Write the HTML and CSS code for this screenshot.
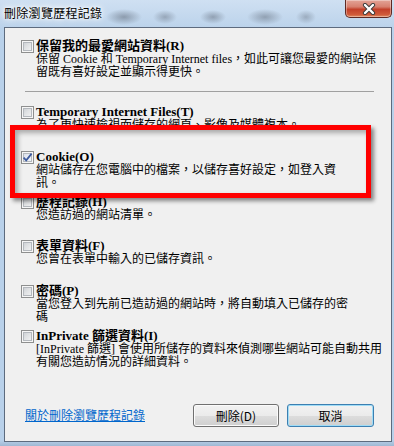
FILE: index.html
```html
<!DOCTYPE html>
<html lang="zh-Hant">
<head>
<meta charset="utf-8">
<title>刪除瀏覽歷程記錄</title>
<link rel="stylesheet" href="styles.css">
</head>
<body>
<div class="window">
  <div class="titlebar">
    <span class="title">刪除瀏覽歷程記錄</span>
    <div class="close">
      <svg width="14" height="12" viewBox="0 0 14 12"><path d="M3 2 L11 10 M11 2 L3 10" stroke="#3a3a3a" stroke-width="4.2" stroke-linecap="round" fill="none"/><path d="M3 2 L11 10 M11 2 L3 10" stroke="#ffffff" stroke-width="2.4" stroke-linecap="round" fill="none"/></svg>
    </div>
  </div>
  <div class="panel">
    <div class="option first">
      <span class="cb"></span>
      <div class="text">
        <div class="label">保留我的最愛網站資料(R)</div>
        <div class="desc">保留 Cookie 和 Temporary Internet files，如此可讓您最愛的網站保<br>留既有喜好設定並顯示得更快。</div>
      </div>
    </div>
    <div class="sep"></div>
    <div class="option">
      <span class="cb"></span>
      <div class="text">
        <div class="label">Temporary Internet Files(T)</div>
        <div class="desc">為了更快速檢視而儲存的網頁、影像及媒體複本。</div>
      </div>
    </div>
    <div class="option">
      <span class="cb checked"><svg width="11" height="11" viewBox="0 0 11 11"><path d="M1.6 5.6 L4.2 8.4 L9.6 1.6" stroke="#3d5a9e" stroke-width="1.7" fill="none"/></svg></span>
      <div class="text">
        <div class="label">Cookie(O)</div>
        <div class="desc">網站儲存在您電腦中的檔案，以儲存喜好設定，如登入資<br>訊。</div>
      </div>
    </div>
    <div class="option">
      <span class="cb"></span>
      <div class="text">
        <div class="label">歷程記錄(H)</div>
        <div class="desc">您造訪過的網站清單。</div>
      </div>
    </div>
    <div class="option">
      <span class="cb"></span>
      <div class="text">
        <div class="label">表單資料(F)</div>
        <div class="desc">您曾在表單中輸入的已儲存資訊。</div>
      </div>
    </div>
    <div class="option">
      <span class="cb"></span>
      <div class="text">
        <div class="label">密碼(P)</div>
        <div class="desc">當您登入到先前已造訪過的網站時，將自動填入已儲存的密<br>碼</div>
      </div>
    </div>
    <div class="option">
      <span class="cb"></span>
      <div class="text">
        <div class="label">InPrivate 篩選資料(I)</div>
        <div class="desc">[InPrivate 篩選] 會使用所儲存的資料來偵測哪些網站可能自動共用<br>有關您造訪情況的詳細資料。</div>
      </div>
    </div>
    <div class="footer">
      <a class="link" href="#">關於刪除瀏覽歷程記錄</a>
      <div class="buttons">
        <button class="btn">刪除(D)</button>
        <button class="btn default">取消</button>
      </div>
    </div>
    <div class="highlight"></div>
  </div>
</div>
</body>
</html>
```
FILE: styles.css
```css
* { box-sizing: border-box; }
html, body { margin: 0; padding: 0; }
body {
  width: 394px;
  height: 446px;
  overflow: hidden;
  background: #b9d1ea;
  font-family: "Liberation Serif", "Noto Sans CJK TC", serif;
  color: #000;
}
.window {
  width: 394px;
  height: 446px;
  display: flex;
  flex-direction: column;
  background: linear-gradient(to bottom, #bcd4ec 0, #b9d1ea 40px, #b9d1ea 440px, #9fb8d3 446px);
}
.titlebar {
  height: 27px;
  flex: none;
  display: flex;
  justify-content: space-between;
  align-items: flex-start;
  padding-left: 4px;
  background:
    radial-gradient(ellipse 18px 8px at 124px 17px, rgba(95,105,120,.55), rgba(95,105,120,0)),
    radial-gradient(ellipse 12px 7px at 165px 17px, rgba(95,105,120,.45), rgba(95,105,120,0)),
    radial-gradient(ellipse 13px 7px at 213px 17px, rgba(95,105,120,.5), rgba(95,105,120,0)),
    radial-gradient(ellipse 18px 8px at 265px 17px, rgba(95,105,120,.5), rgba(95,105,120,0)),
    radial-gradient(ellipse 10px 7px at 306px 17px, rgba(95,105,120,.4), rgba(95,105,120,0)),
    linear-gradient(to bottom, #cfe0f2 0, #bcd3eb 100%);
}
.title {
  font-family: "Noto Sans CJK TC", sans-serif;
  font-size: 12px;
  line-height: 14px;
  letter-spacing: 0.3px;
  margin-top: 6px;
  text-shadow: 0 0 3px #fff, 0 0 6px #fff, 0 0 9px rgba(255,255,255,.9);
}
.close {
  width: 47px;
  height: 18px;
  margin-right: 2px;
  border: 1px solid #5e2a24;
  border-top: 0;
  border-radius: 0 0 5px 5px;
  background: linear-gradient(to bottom, #e3a497 0, #d7806f 40%, #c3402a 55%, #cf5a3a 85%, #e08a60 100%);
  box-shadow: inset 0 0 0 1px rgba(255,255,255,.35);
  display: flex;
  align-items: center;
  justify-content: center;
}
.panel {
  position: relative;
  flex: none;
  height: 415px;
  margin: 0 2px 0 4px;
  border: 1px solid #5d6b7e;
  background: #f0f0f0;
  padding: 11px 17px 0 16px;
}
.option {
  display: flex;
  align-items: flex-start;
  gap: 2px;
  height: 44.8px;
}
.option.first { height: 40px; }
.cb {
  flex: none;
  width: 13px;
  height: 13px;
  margin-top: 1px;
  border: 1px solid #8e8f8f;
  background: linear-gradient(135deg, #c4c8cd 0%, #dfe1e3 45%, #f7f7f7 100%);
  box-shadow: inset 0 0 0 1px #f6f6f6, inset 0 0 0 2px #b4b8bd;
  display: flex;
  align-items: center;
  justify-content: center;
}
.cb.checked {
  background: linear-gradient(135deg, #d2d8e6 0%, #e6eaf2 45%, #f8f9fb 100%);
}
.label {
  font-weight: bold;
  font-size: 13px;
  line-height: 14px;
  white-space: nowrap;
}
.desc {
  font-size: 12px;
  line-height: 13px;
  white-space: nowrap;
}
.sep {
  width: 349px;
  height: 1px;
  margin: 12px 0 13px 4px;
  background: #a0a0a0;
}
.footer {
  display: flex;
  align-items: center;
  margin-top: 30px;
  padding-left: 4px;
}
.link {
  flex: 1;
  font-family: "Noto Sans CJK TC", sans-serif;
  font-size: 12px;
  line-height: 14px;
  color: #0066cc;
  text-decoration: underline;
}
.buttons {
  display: flex;
  gap: 8px;
}
.btn {
  width: 86px;
  height: 23px;
  padding: 0;
  border: 1px solid #707070;
  border-radius: 3px;
  background: linear-gradient(to bottom, #f2f2f2 0%, #ebebeb 50%, #dddddd 51%, #cfcfcf 100%);
  box-shadow: inset 0 0 0 1px #fbfbfb;
  font-family: "Noto Sans CJK TC", sans-serif;
  font-size: 12px;
  color: #000;
}
.btn.default {
  width: 87px;
  border-color: #3c7fb1;
  box-shadow: inset 0 0 0 1px #9fdcf6;
}
.highlight {
  position: absolute;
  left: 5px;
  top: 97px;
  width: 361px;
  height: 73px;
  border: 5px solid #ff0000;
  box-shadow: 3px 3px 4px rgba(0,0,0,.45), inset 3px 3px 5px rgba(0,0,0,.3);
  pointer-events: none;
}
```
